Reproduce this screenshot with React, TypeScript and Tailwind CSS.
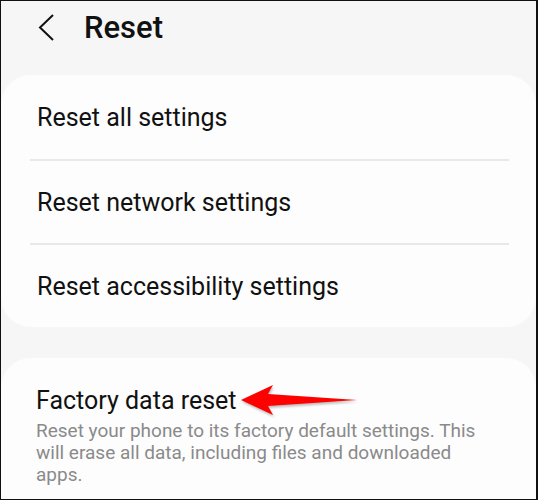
import React from "react";

const rows = ["Reset all settings", "Reset network settings", "Reset accessibility settings"];

function RedArrow() {
  return (
    <svg width="124" height="40" viewBox="0 0 124 40" className="ml-[3px] drop-shadow-[1px_2px_1px_rgba(0,0,0,0.25)]">
      <path d="M1 19 L33 4 L28 13 L117 19 L28 25 L33 34 Z" fill="#fe0000" />
    </svg>
  );
}

export default function App() {
  return (
    <div
      className="h-[500px] w-[538px] overflow-hidden border border-[#111] border-r-2 bg-[#f6f6f6]"
      style={{ fontFamily: "Roboto, 'Liberation Sans', sans-serif" }}
    >
      <header className="flex h-[74px] items-center">
        <svg width="20" height="30" viewBox="0 0 20 30" className="ml-[35px] mb-[20px]">
          <polyline points="17,2 4,14.5 17,27" fill="none" stroke="#111" strokeWidth="2" />
        </svg>
        <h1 className="ml-[28px] mb-[20px] text-[31px] font-medium text-[#111]">Reset</h1>
      </header>

      <section className="rounded-[30px] bg-[#fdfdfd]">
        {rows.map((label, i) => (
          <div key={label}>
            {i > 0 && <div className="ml-[29px] mr-[27px] h-[2px] bg-[#e8e8e8]" />}
            <div className={`flex items-center pl-[36px] pt-[2px] text-[25px] text-[#111] ${i > 0 ? "h-[82px]" : "h-[84px]"}`}>
              {label}
            </div>
          </div>
        ))}
      </section>

      <section className="mt-[31px] h-[200px] rounded-t-[30px] bg-[#fdfdfd] pl-[35px] pr-[38px] pt-[23px]">
        <div className="flex items-center">
          <span className="text-[25px] leading-[32px] text-[#111]">Factory data reset</span>
          <RedArrow />
        </div>
        <p className="mt-[-1px] text-[19px] leading-[22px] text-[#8a8a8a]">
          Reset your phone to its factory default settings. This will erase all data, including files and downloaded
          apps.
        </p>
      </section>
    </div>
  );
}
